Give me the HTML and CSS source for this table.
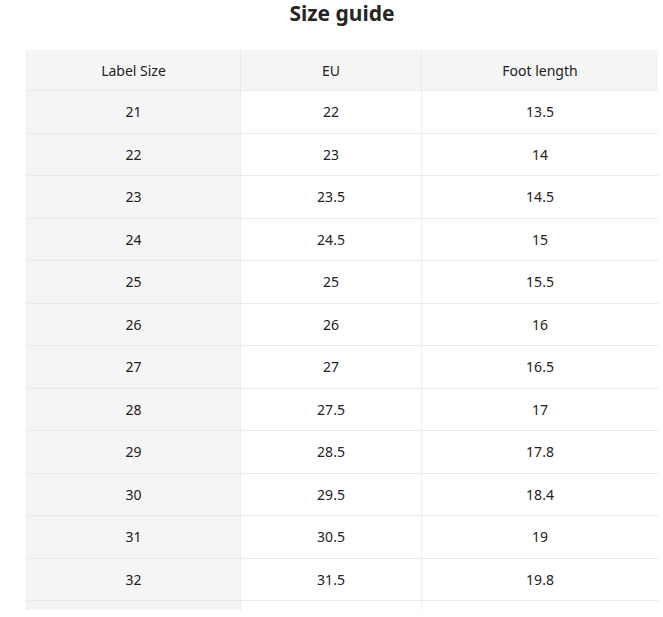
FILE: index.html
```html
<!DOCTYPE html>
<html>
<head>
<meta charset="utf-8">
<link rel="stylesheet" href="styles.css">
</head>
<body>
<div class="modal">
  <h2 class="title">Size guide</h2>
  <div class="scroll">
    <table class="size-table">
      <colgroup>
        <col class="c1"><col class="c2"><col class="c3">
      </colgroup>
      <thead>
        <tr><th>Label Size</th><th>EU</th><th>Foot length</th></tr>
      </thead>
      <tbody>
        <tr><td>21</td><td>22</td><td>13.5</td></tr>
        <tr><td>22</td><td>23</td><td>14</td></tr>
        <tr><td>23</td><td>23.5</td><td>14.5</td></tr>
        <tr><td>24</td><td>24.5</td><td>15</td></tr>
        <tr><td>25</td><td>25</td><td>15.5</td></tr>
        <tr><td>26</td><td>26</td><td>16</td></tr>
        <tr><td>27</td><td>27</td><td>16.5</td></tr>
        <tr><td>28</td><td>27.5</td><td>17</td></tr>
        <tr><td>29</td><td>28.5</td><td>17.8</td></tr>
        <tr><td>30</td><td>29.5</td><td>18.4</td></tr>
        <tr><td>31</td><td>30.5</td><td>19</td></tr>
        <tr><td>32</td><td>31.5</td><td>19.8</td></tr>
        <tr class="partial"><td></td><td></td><td></td></tr>
      </tbody>
    </table>
  </div>
</div>
</body>
</html>
```
FILE: styles.css
```css
html, body {
  margin: 0;
  padding: 0;
  background: #fff;
}
body {
  font-family: "Noto Sans", "Open Sans", sans-serif;
  color: #222;
}
.modal {
  width: 632px;
  margin-left: 26px;
  height: 610px;
  display: flex;
  flex-direction: column;
  overflow: hidden;
}
.title {
  margin: 0;
  flex: 0 0 50px;
  font-size: 21px;
  line-height: 27px;
  font-weight: 700;
  text-align: center;
  color: #262626;
}
.scroll {
  flex: 1;
  min-height: 0;
  overflow: hidden;
}
.size-table {
  width: 632px;
  border-collapse: collapse;
  table-layout: fixed;
  font-size: 14px;
  color: #222;
}
.c1 { width: 214px; }
.c2 { width: 181px; }
.c3 { width: 237px; }
.size-table th,
.size-table td {
  border: 1px solid #ebebeb;
  text-align: center;
  padding: 0;
  font-weight: 400;
}
.size-table th {
  height: 40px;
  background: #f5f5f5;
  border-top: none;
}
.size-table tbody tr {
  height: 42.5px;
}
.size-table td:first-child {
  background: #f5f5f5;
}
```
